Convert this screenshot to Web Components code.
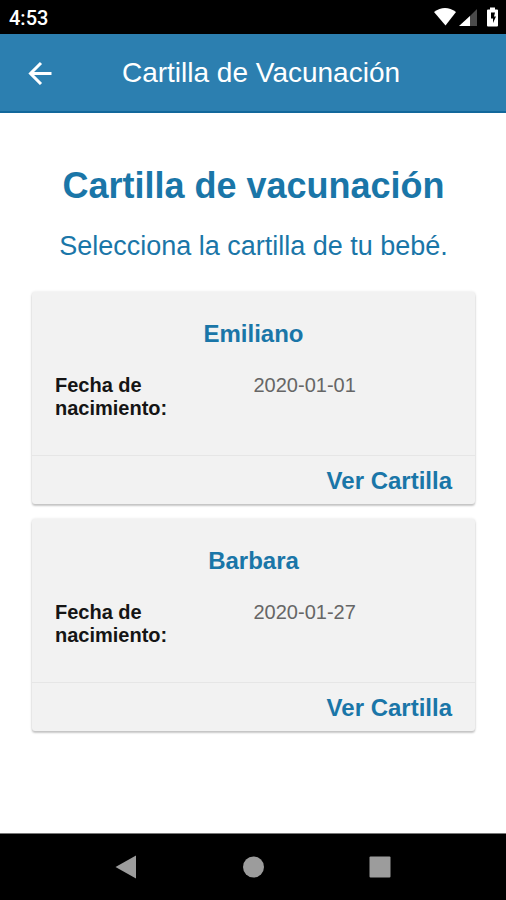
<!DOCTYPE html>
<html lang="es">
<head>
<meta charset="utf-8">
<meta name="viewport" content="width=device-width, initial-scale=1">
<title>Cartilla de Vacunación</title>
<style>
  body { margin: 0; background: #fff; font-family: "Liberation Sans", Arial, sans-serif; }
</style>
</head>
<body>
<vaccine-app></vaccine-app>
<script>
function define(name, html) {
  const template = document.createElement('template');
  template.innerHTML = html;
  customElements.define(name, class extends HTMLElement {
    constructor() {
      super();
      this.attachShadow({ mode: 'open' }).append(template.content.cloneNode(true));
    }
  });
}

define('status-bar', `
<style>
  :host { display: flex; align-items: center; justify-content: space-between; height: 34px;
    padding: 0 7px 0 9px; background: #000; color: #fff; box-sizing: border-box; }
  time { font: 500 20px/34px Roboto, sans-serif; padding-top: 2px; }
  svg { display: block; }
</style>
<time>4:53</time>
<svg width="65" height="24" viewBox="0 0 65 24" role="img" aria-label="Wi-Fi, señal y batería">
  <path d="M0 7Q11 -1 22 7L11.500 20.500Z" fill="#fff"/>
  <path d="M43 4V21H26Z" fill="#4a4a4a"/>
  <path d="M36 11V21H25Z" fill="#fff"/>
  <path d="M56 2.500h5v2h2q1 0 1 1v15q0 1-1 1h-9q-1 0-1-1V5.500q0-1 1-1h2z" fill="#fff"/>
  <path d="M61 7.500h-4v6h2v4.500l3-6.500h-2z" fill="#000"/>
</svg>`);

define('app-header', `
<style>
  :host { display: grid; grid-template-columns: 80px 1fr 80px; align-items: center; height: 79px;
    background: #2c7fb0; color: #fff; border-bottom: 2px solid #12689b; box-sizing: border-box; }
  button { display: flex; align-items: center; justify-content: center; width: 80px; height: 56px;
    padding: 0; border: 0; background: none; color: inherit; }
  h1 { margin: 0; font-size: 28px; line-height: 36px; font-weight: 400; text-align: center; padding-left: 16px; }
</style>
<button type="button" aria-label="Volver">
  <svg width="24" height="24" viewBox="0 0 24 24" fill="none" stroke="currentColor" stroke-width="3"><path d="M23.500 12.500H2.500M13 2L2.500 12.500L13 23"/></svg>
</button>
<h1><slot></slot></h1>`);

define('record-card', `
<style>
  :host { display: block; background: #f2f2f2; border-radius: 3px;
    box-shadow: 0 2px 2px rgba(0,0,0,.2), 0 0 3px rgba(0,0,0,.12); }
  .body { padding: 28px 23px 35px; }
  h3 { margin: 0 0 26px; font-size: 24px; line-height: 28px; text-align: center; color: #1a76a8; }
  dl { display: grid; grid-template-columns: 1fr 1fr; margin: 0; font-size: 20px; line-height: 23px; }
  dt { font-weight: 700; color: #151515; max-width: 150px; }
  dd { margin: 0; color: #666; }
  footer { display: flex; justify-content: flex-end; padding: 2px 23px 0; border-top: 1px solid #e6e6e6; }
  a { font-size: 24px; line-height: 46px; font-weight: 700; color: #1a76a8; text-decoration: none; }
</style>
<div class="body">
  <h3><slot name="name"></slot></h3>
  <dl><dt>Fecha de nacimiento:</dt><dd><slot name="date"></slot></dd></dl>
</div>
<footer><a href="#cartilla">Ver Cartilla</a></footer>`);

define('system-nav', `
<style>
  :host { display: flex; align-items: center; justify-content: center; gap: 87px; height: 67px; background: #000;
    border-top: 1px solid #777; box-sizing: border-box; }
  button { display: flex; align-items: center; justify-content: center; width: 40px; height: 40px; padding: 0; border: 0; background: none; }
  svg { fill: #9c9c9c; }
</style>
<button type="button" aria-label="Atrás"><svg width="24" height="24"><path d="M1.500 12L22 .500V23.500Z"/></svg></button>
<button type="button" aria-label="Inicio"><svg width="24" height="24"><circle cx="12.500" cy="12" r="10.500"/></svg></button>
<button type="button" aria-label="Recientes"><svg width="24" height="24"><rect x="1.500" y="1.500" width="21" height="21" rx="1"/></svg></button>`);

define('vaccine-app', `
<style>
  :host { display: flex; flex-direction: column; min-height: 100vh; }
  main { flex: 1; padding: 52px 31px 24px 32px; }
  h2 { margin: 0 0 21px; font-size: 36px; line-height: 42px; text-align: center; color: #1a76a8; }
  p { margin: 0 0 28px; font-size: 27px; line-height: 36px; text-align: center; color: #1a76a8; }
  .list { display: flex; flex-direction: column; gap: 15px; }
</style>
<status-bar></status-bar>
<app-header>Cartilla de Vacunación</app-header>
<main>
  <h2>Cartilla de vacunación</h2>
  <p>Selecciona la cartilla de tu bebé.</p>
  <div class="list">
    <record-card><span slot="name">Emiliano</span><span slot="date">2020-01-01</span></record-card>
    <record-card><span slot="name">Barbara</span><span slot="date">2020-01-27</span></record-card>
  </div>
</main>
<system-nav></system-nav>`);
</script>
</body>
</html>
